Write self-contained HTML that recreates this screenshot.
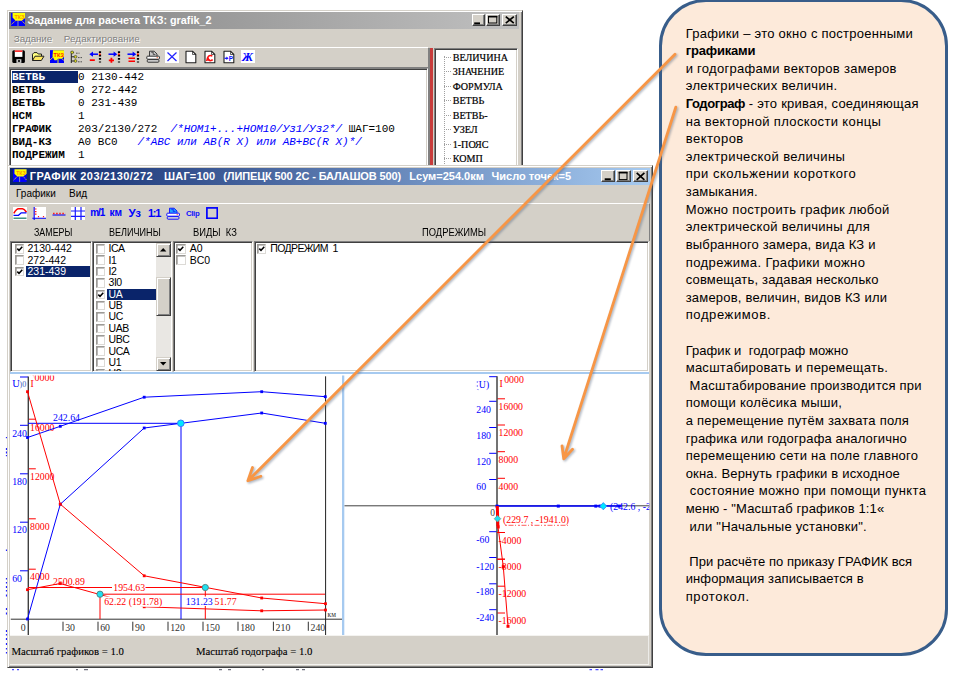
<!DOCTYPE html>
<html lang="ru">
<head>
<meta charset="utf-8">
<title>Графики</title>
<style>
*{box-sizing:border-box;margin:0;padding:0}
html,body{width:960px;height:673px;overflow:hidden;background:#fff}
body{position:relative;font-family:"Liberation Sans",sans-serif;font-size:10px;color:#000}
.abs{position:absolute}
.win{position:absolute;background:#d4d0c8;border:1px solid #d4d0c8;border-right-color:#404040;border-bottom-color:#404040;box-shadow:inset 1px 1px 0 #fff,inset -1px -1px 0 #808080}
.tbar{position:absolute;height:16.5px;color:#fff;font-weight:bold;font-size:11px;line-height:16px;white-space:nowrap;overflow:hidden}
.tbar span{position:absolute;left:19px;top:0}
.cbtn{position:absolute;width:14px;height:12.5px;background:#d4d0c8;border:1px solid #fff;border-right-color:#404040;border-bottom-color:#404040;box-shadow:inset -1px -1px 0 #808080}
.menu{position:absolute;font-size:10px;white-space:nowrap;line-height:12px}
.sunk{position:absolute;background:#fff;border:1px solid #808080;border-right-color:#fff;border-bottom-color:#fff;box-shadow:inset 1px 1px 0 #404040,inset -1px -1px 0 #d4d0c8;overflow:hidden}
.mono{font-family:"Liberation Mono",monospace;font-size:11px;line-height:13px;white-space:pre;position:absolute;left:2px;top:2.3px;color:#000}
.mono b{font-weight:bold}
.mono i{color:#0000ff;font-style:italic}
.mono .sel{background:#0a246a;color:#fff}
.tree{-webkit-text-stroke:.2px #000;position:absolute;font-family:"Liberation Serif",serif;font-size:10.1px;line-height:14.5px;white-space:nowrap;color:#000}
.li{position:absolute;white-space:nowrap;font-size:10.5px;line-height:11px;height:11px}
.li.sel{background:#0a246a;color:#fff}
.cb{position:absolute;width:9.5px;height:9.5px;background:#fff;border:1px solid #9c9a96;border-right-color:#dcdad6;border-bottom-color:#dcdad6;box-shadow:inset .6px .6px 0 #8a8884}
.sbtn{position:absolute;width:14.5px;background:#d4d0c8;border:1px solid #fff;border-left-color:#d4d0c8;border-top-color:#d4d0c8;border-right-color:#404040;border-bottom-color:#404040;box-shadow:inset 1px 1px 0 #fff,inset -1px -1px 0 #808080}
.hdr{position:absolute;font-size:10.2px;line-height:12px;white-space:nowrap;transform-origin:0 50%}
.st{-webkit-text-stroke:.1px #000;position:absolute;font-family:"Liberation Serif",serif;font-size:10.75px;line-height:12px;white-space:nowrap}
#callout{position:absolute;left:659px;top:-1px;width:288.5px;height:657px;border:3px solid #385d8a;border-radius:47px;background:#fdeada}
#ctext .r{height:17.62px}
#ctext{position:absolute;left:685.7px;top:24.6px;font-size:13px;line-height:17.62px;white-space:nowrap;color:#000}
#ctext b{font-weight:bold}
svg text{font-family:"Liberation Serif",serif}
</style>
</head>
<body>

<!-- ================= WINDOW 1 ================= -->
<div class="win" id="w1" style="left:7px;top:10px;width:516px;height:160px"></div>
<div class="tbar" style="left:9px;top:12px;width:510px;background:linear-gradient(90deg,#808080,#c0c0c0)"><span style="left:18.5px;font-size:10.8px">Задание для расчета ТКЗ: grafik_2</span></div>
<div class="cbtn" style="left:471.5px;top:13.6px;width:13px"></div>
<div class="cbtn" style="left:485.7px;top:13.6px;width:14.3px"></div>
<div class="cbtn" style="left:502.4px;top:13.6px;width:14.3px"></div>
<svg class="abs" style="left:470px;top:12px" width="50" height="16" viewBox="470 12 50 16"><rect x="474.2" y="22.4" width="5.8" height="1.9" fill="#000"/><rect x="488.5" y="16.6" width="8.3" height="6.4" fill="none" stroke="#000" stroke-width="1"/><rect x="488" y="15.8" width="9.3" height="1.6" fill="#000"/><path d="M505.8 16.6L513.8 23.2M513.8 16.6L505.8 23.2" stroke="#000" stroke-width="1.7"/></svg>
<div class="menu" style="left:13.8px;top:32.5px;font-size:9.85px;letter-spacing:-.1px;color:#808080;text-shadow:1px 1px 0 #fff">Задание</div>
<div class="menu" style="left:63.8px;top:32.5px;font-size:9.85px;letter-spacing:.08px;color:#808080;text-shadow:1px 1px 0 #fff">Редактирование</div>
<!-- toolbar strip -->
<div class="abs" style="left:9px;top:47px;width:419px;height:21px;border-top:1px solid #fff;border-bottom:1px solid #808080"></div>
<svg class="abs" style="left:10.8px;top:13px" width="14.4" height="13.3" viewBox="0 0 14 13"><rect x="0" y="0" width="14" height="13" fill="#0000ff"/><path d="M1.5 0H14V4.5L10.5 7.5H4.5L1.5 4.5Z" fill="#ffff00"/><path d="M4.5 7.5L0 11.5M10.5 7.5L14 11" stroke="#ffd820" stroke-width="0.9" stroke-dasharray="1.2 0.7"/><path d="M6.8 7.5V13" stroke="#b0b0a0" stroke-width="0.8"/><text x="3.3" y="5.6" font-size="5.2" font-weight="bold" fill="#ff9000" style="font-family:'Liberation Sans',sans-serif">ТКЗ</text></svg>
<svg class="abs" style="left:11.5px;top:50px" width="13.5" height="13.5" viewBox="0 0 13.5 13.5"><rect x="0.3" y="0.3" width="12.6" height="12.6" rx="1.5" fill="#000"/><rect x="2.8" y="0.3" width="7.6" height="6.6" fill="#fff"/><rect x="2.8" y="0.3" width="7.6" height="1.7" fill="#ff3030"/><rect x="4.4" y="9.2" width="5" height="3.7" fill="#c8c8c8"/><rect x="6.2" y="10" width="1.6" height="2" fill="#000"/></svg>
<svg class="abs" style="left:31px;top:51px" width="14" height="12" viewBox="0 0 14 12"><path d="M1.5 9.5V3.2L3 1.6H6L7.2 3H10.5V5" fill="#ffff80" stroke="#202020" stroke-width="1"/><path d="M1.5 9.5L4 5.2H13L10.3 9.5Z" fill="#ffe860" stroke="#202020" stroke-width="1"/></svg>
<svg class="abs" style="left:50px;top:50px" width="14" height="13.3" viewBox="0 0 14 13"><rect x="0" y="0" width="14" height="13" fill="#0000ff"/><path d="M3 0H14V6.5L12 8.5H8L6.5 10H4.5L2.5 6Z" fill="#ffff00"/><path d="M3 7L0 10M12 8.5L14 10.5" stroke="#ffe020" stroke-width="0.9"/><path d="M8 9V13" stroke="#ffff00" stroke-width="0.9"/><text x="3.6" y="6.8" font-size="5.4" font-weight="bold" fill="#ff2000" style="font-family:'Liberation Sans',sans-serif">ТКЗ</text></svg>
<svg class="abs" style="left:68.5px;top:50px" width="14" height="14" viewBox="0 0 14 14"><path d="M2.3 1V13M2.3 2.5H5M2.3 6.8H6.5M2.3 11H6.5" stroke="#202020" stroke-width="1" fill="none"/><circle cx="3.2" cy="2.4" r="1.4" fill="#d8d820" stroke="#303030" stroke-width="0.6"/><circle cx="6.5" cy="6.8" r="1.4" fill="#d8d820" stroke="#303030" stroke-width="0.6"/><circle cx="6.5" cy="11" r="1.4" fill="#d8d820" stroke="#303030" stroke-width="0.6"/><path d="M7 3.2H10.5M9 7.6H13M9 11.8H13" stroke="#505050" stroke-width="1" stroke-dasharray="1.6 0.9"/></svg>
<svg class="abs" style="left:88.5px;top:50px" width="14" height="14" viewBox="0 0 14 14"><path d="M11 1.2V12.5" stroke="#000" stroke-width="2.2" stroke-dasharray="1.8 1.6"/><circle cx="10.8" cy="4.2" r="1" fill="#ff2000"/><path d="M9 4.2H2.5" stroke="#0000ff" stroke-width="1.5"/><path d="M0.3 4.2L4 1.6V6.8Z" fill="#0000ff"/><rect x="0.8" y="9.3" width="5" height="1.7" fill="#ff0000"/></svg>
<svg class="abs" style="left:107.8px;top:50px" width="14" height="14" viewBox="0 0 14 14"><path d="M11 1.2V12.5" stroke="#000" stroke-width="2.2" stroke-dasharray="1.8 1.6"/><circle cx="10.8" cy="4.2" r="1" fill="#ff2000"/><path d="M0.5 4.2H7" stroke="#0000ff" stroke-width="1.5"/><path d="M9.3 4.2L5.6 1.6V6.8Z" fill="#0000ff"/><path d="M0.8 10.3H6M3.4 7.8V12.8" stroke="#ff0000" stroke-width="1.8"/></svg>
<svg class="abs" style="left:127px;top:50px" width="14" height="14" viewBox="0 0 14 14"><path d="M11 1.2V12.5" stroke="#000" stroke-width="2.2" stroke-dasharray="1.8 1.6"/><circle cx="10.8" cy="4.2" r="1" fill="#ff2000"/><path d="M0.5 4.2H7" stroke="#0000ff" stroke-width="1.5"/><path d="M9.3 4.2L5.6 1.6V6.8Z" fill="#0000ff"/><path d="M1.5 8.2H8M1.5 11.3H8" stroke="#ff0000" stroke-width="1.6"/></svg>
<svg class="abs" style="left:146px;top:50px" width="14.5" height="13.5" viewBox="0 0 14.5 13.5"><path d="M3.5 6V1.2H8.2L11 4V6" fill="#c8c8c8" stroke="#303030" stroke-width="0.9"/><path d="M5.2 2.2H7.2V4.4H9.4" fill="none" stroke="#303030" stroke-width="0.8"/><rect x="0.8" y="6.2" width="12.6" height="3" rx="0.8" fill="#fff" stroke="#303030" stroke-width="1"/><rect x="1.3" y="9.6" width="11.6" height="2.6" rx="0.8" fill="#d8d8d8" stroke="#303030" stroke-width="1"/><rect x="10.6" y="7" width="1.3" height="1.2" fill="#ff8060"/></svg>
<svg class="abs" style="left:164.5px;top:50.2px" width="14" height="13.3" viewBox="0 0 14 13.3"><rect width="14" height="13.3" fill="#fff"/><path d="M2.5 2.5L11.5 11M11.5 2.5L2.5 11" stroke="#2020ff" stroke-width="1.2"/></svg>
<svg class="abs" style="left:184.5px;top:50px" width="12" height="14" viewBox="0 0 12 14"><path d="M1 1.2H7.5L10.8 4.5V12.8H1Z" fill="#fff" stroke="#202020" stroke-width="1.1" stroke-linejoin="round"/><path d="M7.5 1.2V4.5H10.8" fill="none" stroke="#202020" stroke-width="0.7"/></svg>
<svg class="abs" style="left:203.8px;top:50px" width="12" height="14" viewBox="0 0 12 14"><path d="M1 1.2H7.5L10.8 4.5V12.8H1Z" fill="#fff" stroke="#202020" stroke-width="1.1" stroke-linejoin="round"/><path d="M7.5 1.2V4.5H10.8" fill="none" stroke="#202020" stroke-width="0.7"/><path d="M8.3 6.2A2.6 2.6 0 1 0 8.6 9.5" fill="none" stroke="#ff1010" stroke-width="1.5"/><path d="M1.8 11.3L3.2 6.5L6.2 10Z" fill="#ff1010"/></svg>
<svg class="abs" style="left:222.8px;top:50px" width="12" height="14" viewBox="0 0 12 14"><path d="M1 1.2H7.5L10.8 4.5V12.8H1Z" fill="#fff" stroke="#202020" stroke-width="1.1" stroke-linejoin="round"/><path d="M7.5 1.2V4.5H10.8" fill="none" stroke="#202020" stroke-width="0.7"/><path d="M1.5 8.3H4" stroke="#1010ff" stroke-width="1.2"/><path d="M5.6 8.3L3.4 6.5V10.1Z" fill="#1010ff"/><text x="5.8" y="11.3" font-size="6.5" font-weight="bold" fill="#1010ff" style="font-family:'Liberation Sans',sans-serif">P</text></svg>
<svg class="abs" style="left:241.3px;top:50.2px" width="14" height="13.3" viewBox="0 0 14 13.3"><rect width="14" height="13.3" fill="#fff"/><text x="1" y="10.8" font-size="12" font-weight="bold" font-style="italic" fill="#0000ff" style="font-family:'Liberation Serif',serif">Ж</text></svg>
<!-- text area -->
<div class="sunk" style="left:9px;top:67.5px;width:419px;height:100px">
<div class="mono"><b><span class="sel">ВЕТВЬ     </span></b>0 2130-442
<b>ВЕТВЬ</b>     0 272-442
<b>ВЕТВЬ</b>     0 231-439
<b>НСМ</b>       1
<b>ГРАФИК</b>    203/2130/272  <i>/*НОМ1+...+НОМ10/Уз1/Уз2*/</i> ШАГ=100
<b>ВИД-КЗ</b>    A0 BC0   <i>/*АВС или АВ(R X) или АВ+ВС(R X)*/</i>
<b>ПОДРЕЖИМ</b>  1</div>
</div>
<!-- red splitter -->
<div class="abs" style="left:430px;top:47.5px;width:3px;height:120px;background:#c83c3c"></div>
<div class="abs" style="left:428px;top:47.5px;width:2px;height:120px;background:#808080"></div>
<!-- tree panel -->
<div class="sunk" style="left:434px;top:47.5px;width:84px;height:120px"></div>
<div class="abs" style="left:443.5px;top:56px;width:0;height:110px;border-left:1px dotted #a0a0a0"></div>
<div class="abs" style="left:444px;top:56.7px;width:7px;height:0;border-top:1px dotted #a0a0a0"></div>
<div class="abs" style="left:444px;top:71.2px;width:7px;height:0;border-top:1px dotted #a0a0a0"></div>
<div class="abs" style="left:444px;top:85.7px;width:7px;height:0;border-top:1px dotted #a0a0a0"></div>
<div class="abs" style="left:444px;top:100.2px;width:7px;height:0;border-top:1px dotted #a0a0a0"></div>
<div class="abs" style="left:444px;top:114.7px;width:7px;height:0;border-top:1px dotted #a0a0a0"></div>
<div class="abs" style="left:444px;top:129.2px;width:7px;height:0;border-top:1px dotted #a0a0a0"></div>
<div class="abs" style="left:444px;top:143.7px;width:7px;height:0;border-top:1px dotted #a0a0a0"></div>
<div class="abs" style="left:444px;top:158.2px;width:7px;height:0;border-top:1px dotted #a0a0a0"></div>
<div class="tree" style="left:452.7px;top:50.6px">ВЕЛИЧИНА<br>ЗНАЧЕНИЕ<br>ФОРМУЛА<br>ВЕТВЬ<br>ВЕТВЬ-<br>УЗЕЛ<br>1-ПОЯС<br>КОМП</div>

<!-- ================= WINDOW 2 ================= -->
<div class="win" id="w2" style="left:7px;top:165px;width:646px;height:503px"></div>
<div class="tbar" style="left:10px;top:168px;width:639.5px;background:linear-gradient(90deg,#0a246a,#a6caf0)"><span style="left:19.7px;letter-spacing:.46px">ГРАФИК 203/2130/272</span><span style="left:154px;letter-spacing:.2px">ШАГ=100</span><span style="left:213.3px;letter-spacing:-.13px">(ЛИПЕЦК 500 2С - БАЛАШОВ 500)</span><span style="left:399.3px">Lсум=254.0км</span><span style="left:481.6px">Число точек=5</span></div>
<div class="cbtn" style="left:601.2px;top:169.6px;width:14px"></div>
<div class="cbtn" style="left:616.2px;top:169.6px;width:14.6px"></div>
<div class="cbtn" style="left:633px;top:169.6px;width:14.6px"></div>
<svg class="abs" style="left:600px;top:168px" width="50" height="16" viewBox="600 168 50 16"><rect x="604.7" y="178.3" width="6.1" height="2" fill="#000"/><rect x="619.2" y="172.6" width="7.8" height="7" fill="none" stroke="#000" stroke-width="1"/><rect x="618.7" y="171.7" width="8.8" height="1.7" fill="#000"/><path d="M636.7 172.8L644.4 179.8M644.4 172.8L636.7 179.8" stroke="#000" stroke-width="1.7"/></svg>
<div class="menu" style="left:16px;top:188px">Графики</div>
<div class="menu" style="left:69px;top:188px">Вид</div>
<!-- panel with toolbar and headers -->
<svg class="abs" style="left:13px;top:169.2px" width="13.6" height="13.3" viewBox="0 0 14 13"><rect x="0" y="0" width="14" height="13" fill="#0000ff"/><path d="M1.5 0H14V4.5L10.5 7.5H4.5L1.5 4.5Z" fill="#ffff00"/><path d="M4.5 7.5L0 11.5M10.5 7.5L14 11" stroke="#ffd820" stroke-width="0.9" stroke-dasharray="1.2 0.7"/><path d="M6.8 7.5V13" stroke="#b0b0a0" stroke-width="0.8"/><text x="3.3" y="5.6" font-size="5.2" font-weight="bold" fill="#ff9000" style="font-family:'Liberation Sans',sans-serif">ТКЗ</text></svg>
<svg class="abs" style="left:13.3px;top:206.5px" width="14" height="13.3" viewBox="0 0 14 13.3"><rect width="14" height="13.3" fill="#fff"/><path d="M0.8 6.3C2.5 3.5 4 1.8 5.5 1.8H9.5C11.5 2 12.5 3.8 13.5 5.2" fill="none" stroke="#ff0000" stroke-width="1.6"/><path d="M0.5 8.3H5.5L8.2 5.8H13.5" fill="none" stroke="#0000ff" stroke-width="1.2"/><path d="M0.5 11.2H13.5" stroke="#208070" stroke-width="1.3"/></svg>
<svg class="abs" style="left:32.3px;top:206.5px" width="14" height="13.3" viewBox="0 0 14 13.3"><rect x="2" width="12" height="11" fill="#fff"/><path d="M2.2 0V13.3M0.3 11.2H14" stroke="#0000ff" stroke-width="1.1"/><path d="M2.8 2H4.5M2.8 4.6H4.5M2.8 7.2H4.5M6.5 10.3V9M11.5 10.3V9" stroke="#ff2020" stroke-width="1.2"/></svg>
<svg class="abs" style="left:51.5px;top:206.5px" width="14" height="13.3" viewBox="0 0 14 13.3"><path d="M0.5 8H13.5" stroke="#0000ff" stroke-width="1.1"/><path d="M1 6.5H13.5" stroke="#ff2020" stroke-width="1.3" stroke-dasharray="1.6 1.5"/></svg>
<svg class="abs" style="left:70.5px;top:206.5px" width="14" height="13.3" viewBox="0 0 14 13.3"><rect width="14" height="13.3" fill="#fff"/><path d="M4.3 0V13.3M10 0V13.3M0 4H14M0 9.3H14" stroke="#1818ff" stroke-width="1.2"/></svg>
<div class="abs" style="left:90.2px;top:206px;width:14px;height:14px;line-height:14px;font-weight:bold;color:#0000ff;font-size:10px;letter-spacing:-1px;white-space:nowrap">m/1</div>
<div class="abs" style="left:109.5px;top:206px;width:14px;height:14px;line-height:14px;font-weight:bold;color:#0000ff;font-size:10.2px;letter-spacing:0px;white-space:nowrap">км</div>
<div class="abs" style="left:128.6px;top:206px;width:14px;height:14px;line-height:14px;font-weight:bold;color:#0000ff;font-size:11.5px;letter-spacing:0px;white-space:nowrap">Уз</div>
<div class="abs" style="left:148px;top:206px;width:12px;height:14px;line-height:14px;font-weight:bold;color:#0000ff;font-size:11px;letter-spacing:-1.3px;white-space:nowrap">1:1</div>
<svg class="abs" style="left:166.3px;top:206.5px" width="14.5" height="13.5" viewBox="0 0 14.5 13.5"><path d="M3.5 6V1.2H8.2L11 4V6" fill="#20a0ff" stroke="#1010ff" stroke-width="0.9"/><path d="M5.2 2.2H7.2V4.4H9.4" fill="none" stroke="#1010ff" stroke-width="0.8"/><rect x="0.8" y="6.2" width="12.6" height="3" rx="0.8" fill="#fff" stroke="#1010ff" stroke-width="1"/><rect x="1.3" y="9.6" width="11.6" height="2.6" rx="0.8" fill="#d8d8d8" stroke="#1010ff" stroke-width="1"/><rect x="10.6" y="7" width="1.3" height="1.2" fill="#ff8060"/></svg>
<div class="abs" style="left:186px;top:206.5px;width:14px;height:14px;line-height:14px;color:#1010ff;font-weight:bold;font-size:7.8px;letter-spacing:-.35px;white-space:nowrap">Clip</div>
<svg class="abs" style="left:205.7px;top:206.9px" width="12.2" height="12.2" viewBox="0 0 12.2 12.2"><rect x="0.9" y="0.9" width="10.4" height="10.4" fill="none" stroke="#0000ff" stroke-width="1.7"/></svg>

<div class="abs" style="left:10px;top:203px;width:640px;height:38px;border-top:1px solid #fff;border-right:1px solid #808080"></div>
<div class="hdr" style="left:34.2px;top:226.5px;transform:scaleX(.87)">ЗАМЕРЫ</div>
<div class="hdr" style="left:109.2px;top:226.5px;transform:scaleX(.89)">ВЕЛИЧИНЫ</div>
<div class="hdr" style="left:192.8px;top:226.5px;transform:scaleX(.92)">ВИДЫ&nbsp; КЗ</div>
<div class="hdr" style="left:422.1px;top:226.5px;transform:scaleX(.92)">ПОДРЕЖИМЫ</div>
<!-- listboxes -->
<div class="sunk" style="left:10px;top:240.5px;width:81.5px;height:131px"></div>
<div class="sunk" style="left:92px;top:240.5px;width:80px;height:131px"></div>
<div class="sunk" style="left:172.5px;top:240.5px;width:80.5px;height:131px"></div>
<div class="sunk" style="left:254px;top:240.5px;width:395px;height:131px"></div>

<div id="lists" class="abs" style="left:0;top:0;width:660px;height:370.5px;overflow:hidden">
<div class="cb" style="left:14.7px;top:244.1px"></div>
<svg class="abs" style="left:14.7px;top:244.1px" width="9.5" height="9.5" viewBox="0 0 9.5 9.5"><path d="M2.3 4.6L4 6.3L7.3 2.8" fill="none" stroke="#000" stroke-width="1.5"/></svg>
<div class="li" style="left:26px;top:243.2px;width:64px;padding-left:1.5px">2130-442</div>
<div class="cb" style="left:14.7px;top:255.47px"></div>
<div class="li" style="left:26px;top:254.6px;width:64px;padding-left:1.5px">272-442</div>
<div class="cb" style="left:14.7px;top:266.84px"></div>
<svg class="abs" style="left:14.7px;top:266.84px" width="9.5" height="9.5" viewBox="0 0 9.5 9.5"><path d="M2.3 4.6L4 6.3L7.3 2.8" fill="none" stroke="#000" stroke-width="1.5"/></svg>
<div class="li sel" style="left:26px;top:265.9px;width:64px;padding-left:1.5px">231-439</div>
<div class="cb" style="left:95.5px;top:244.1px"></div>
<div class="li" style="left:107px;top:243.2px;width:49px;padding-left:1.5px;letter-spacing:-.45px">ICA</div>
<div class="cb" style="left:95.5px;top:255.47px"></div>
<div class="li" style="left:107px;top:254.6px;width:49px;padding-left:1.5px;letter-spacing:-.45px">I1</div>
<div class="cb" style="left:95.5px;top:266.84px"></div>
<div class="li" style="left:107px;top:265.9px;width:49px;padding-left:1.5px;letter-spacing:-.45px">I2</div>
<div class="cb" style="left:95.5px;top:278.21px"></div>
<div class="li" style="left:107px;top:277.3px;width:49px;padding-left:1.5px;letter-spacing:-.45px">3I0</div>
<div class="cb" style="left:95.5px;top:289.58px"></div>
<svg class="abs" style="left:95.5px;top:289.58px" width="9.5" height="9.5" viewBox="0 0 9.5 9.5"><path d="M2.3 4.6L4 6.3L7.3 2.8" fill="none" stroke="#000" stroke-width="1.5"/></svg>
<div class="li sel" style="left:107px;top:288.7px;width:49px;padding-left:1.5px;letter-spacing:-.45px">UA</div>
<div class="cb" style="left:95.5px;top:300.94999999999993px"></div>
<div class="li" style="left:107px;top:300.0px;width:49px;padding-left:1.5px;letter-spacing:-.45px">UB</div>
<div class="cb" style="left:95.5px;top:312.31999999999994px"></div>
<div class="li" style="left:107px;top:311.4px;width:49px;padding-left:1.5px;letter-spacing:-.45px">UC</div>
<div class="cb" style="left:95.5px;top:323.68999999999994px"></div>
<div class="li" style="left:107px;top:322.8px;width:49px;padding-left:1.5px;letter-spacing:-.45px">UAB</div>
<div class="cb" style="left:95.5px;top:335.05999999999995px"></div>
<div class="li" style="left:107px;top:334.2px;width:49px;padding-left:1.5px;letter-spacing:-.45px">UBC</div>
<div class="cb" style="left:95.5px;top:346.42999999999995px"></div>
<div class="li" style="left:107px;top:345.5px;width:49px;padding-left:1.5px;letter-spacing:-.45px">UCA</div>
<div class="cb" style="left:95.5px;top:357.79999999999995px"></div>
<div class="li" style="left:107px;top:356.9px;width:49px;padding-left:1.5px;letter-spacing:-.45px">U1</div>
<div class="cb" style="left:95.5px;top:369.16999999999996px"></div>
<div class="li" style="left:107px;top:368.3px;width:49px;padding-left:1.5px;letter-spacing:-.45px">U2</div>
<div class="cb" style="left:176.3px;top:244.1px"></div>
<svg class="abs" style="left:176.3px;top:244.1px" width="9.5" height="9.5" viewBox="0 0 9.5 9.5"><path d="M2.3 4.6L4 6.3L7.3 2.8" fill="none" stroke="#000" stroke-width="1.5"/></svg>
<div class="li" style="left:188.2px;top:243.2px;width:40px;padding-left:1.5px">A0</div>
<div class="cb" style="left:176.3px;top:255.47px"></div>
<div class="li" style="left:188.2px;top:254.6px;width:40px;padding-left:1.5px">BC0</div>
<div class="cb" style="left:256.7px;top:244.1px"></div>
<svg class="abs" style="left:256.7px;top:244.1px" width="9.5" height="9.5" viewBox="0 0 9.5 9.5"><path d="M2.3 4.6L4 6.3L7.3 2.8" fill="none" stroke="#000" stroke-width="1.5"/></svg>
<div class="li" style="left:268.8px;top:243.2px;width:80px;padding-left:1.5px;letter-spacing:-.62px">ПОДРЕЖИМ&nbsp; 1</div>
<div class="abs" style="left:156.3px;top:242.5px;width:14.5px;height:128px;background:#e9e7e3"></div>
<div class="sbtn" style="left:156.3px;top:243px;height:13.5px"></div>
<div class="sbtn" style="left:156.3px;top:276.5px;height:39.5px"></div>
<div class="sbtn" style="left:156.3px;top:357px;height:13.5px"></div>
<svg class="abs" style="left:156.3px;top:243px" width="14.5" height="13.5"><path d="M4 8.5L7.2 5L10.4 8.5Z" fill="#000"/></svg>
<svg class="abs" style="left:156.3px;top:357px" width="14.5" height="13.5"><path d="M4 5L7.2 8.5L10.4 5Z" fill="#000"/></svg>
</div>
<!-- graph area -->
<div class="abs" style="left:10px;top:372px;width:639.3px;height:263.5px;background:#fff;border-top:2.5px solid #a6caf0"></div>

<!-- status bar -->
<div class="abs" style="left:10px;top:635.3px;width:639.3px;height:29.7px;border-top:1px solid #f4f3f0;border-bottom:1px solid #f4f3f0;border-right:1px solid #ecebe8"></div>
<div class="st" style="left:11.5px;top:645px">Масштаб графиков = 1.0</div>
<div class="st" style="left:196px;top:645px">Масштаб годографа = 1.0</div>

<!-- ================= CALLOUT ================= -->
<div id="callout"></div>
<div id="ctext">
<div class="r" style="letter-spacing:0.270px">Графики – это окно с построенными</div>
<div class="r" style="letter-spacing:-0.189px"><b>графиками</b></div>
<div class="r" style="letter-spacing:0.277px">и годографами векторов замеров</div>
<div class="r" style="letter-spacing:0.343px">электрических величин.</div>
<div class="r" style="letter-spacing:0.236px"><b style="letter-spacing:-.42px">Годограф</b> - это кривая, соединяющая</div>
<div class="r" style="letter-spacing:0.365px">на векторной плоскости концы</div>
<div class="r" style="letter-spacing:0.477px">векторов</div>
<div class="r" style="letter-spacing:0.397px">электрической величины</div>
<div class="r" style="letter-spacing:0.524px">при скольжении короткого</div>
<div class="r" style="letter-spacing:0.232px">замыкания.</div>
<div class="r" style="letter-spacing:0.311px">Можно построить график любой</div>
<div class="r" style="letter-spacing:0.293px">электрической величины для</div>
<div class="r" style="letter-spacing:0.181px">выбранного замера, вида КЗ и</div>
<div class="r" style="letter-spacing:0.414px">подрежима. Графики можно</div>
<div class="r" style="letter-spacing:0.175px">совмещать, задавая несколько</div>
<div class="r" style="letter-spacing:0.207px">замеров, величин, видов КЗ или</div>
<div class="r" style="letter-spacing:0.606px">подрежимов.</div>
<div class="r">&nbsp;</div>
<div class="r" style="letter-spacing:0.055px">График и&nbsp; годограф можно</div>
<div class="r" style="letter-spacing:0.260px">масштабировать и перемещать.</div>
<div class="r" style="letter-spacing:0.248px">&nbsp;Масштабирование производится при</div>
<div class="r" style="letter-spacing:0.321px">помощи колёсика мыши,</div>
<div class="r" style="letter-spacing:0.208px">а перемещение путём захвата поля</div>
<div class="r" style="letter-spacing:0.149px">графика или годографа аналогично</div>
<div class="r" style="letter-spacing:0.284px">перемещению сети на поле главного</div>
<div class="r" style="letter-spacing:0.190px">окна. Вернуть графики в исходное</div>
<div class="r" style="letter-spacing:0.345px">&nbsp;состояние можно при помощи пункта</div>
<div class="r" style="letter-spacing:0.143px">меню - "Масштаб графиков 1:1«</div>
<div class="r" style="letter-spacing:0.252px">&nbsp;или "Начальные установки".</div>
<div class="r">&nbsp;</div>
<div class="r" style="letter-spacing:0.052px">&nbsp;При расчёте по приказу ГРАФИК вся</div>
<div class="r" style="letter-spacing:0.117px">информация записывается в</div>
<div class="r" style="letter-spacing:0.641px">протокол.</div>
</div>

<svg class="abs" id="chart" style="left:0;top:0" width="960" height="673" viewBox="0 0 960 673">
<defs><clipPath id="cl"><rect x="10.5" y="375.5" width="331.5" height="259.5"/></clipPath><clipPath id="cr"><rect x="344.3" y="375.5" width="305" height="259.5"/></clipPath><filter id="sh" x="-5%" y="-5%" width="110%" height="110%"><feGaussianBlur stdDeviation="1"/></filter></defs>
<g fill="#2020ff"><rect x="5.9" y="437" width="1.1" height="1.2"/><rect x="5.9" y="448" width="1.1" height="2"/><rect x="5.9" y="451.5" width="1.1" height="2"/><rect x="5.9" y="455" width="1.1" height="1.2"/><rect x="5.9" y="549.5" width="1.1" height="1.5"/><rect x="5.9" y="578" width="1.1" height="1.5"/><rect x="5.9" y="582" width="1.1" height="1.5"/><rect x="5.9" y="586" width="1.1" height="2"/><rect x="5.9" y="590" width="1.1" height="1.5"/><rect x="5.9" y="594.5" width="1.1" height="2"/><rect x="5.9" y="608" width="1.1" height="2"/><rect x="5.9" y="612.5" width="1.1" height="2"/><rect x="5.9" y="630" width="1.1" height="2"/><rect x="5.9" y="634" width="1.1" height="1.5"/><rect x="5.9" y="638" width="1.1" height="2"/><rect x="5.9" y="643" width="1.1" height="2"/><rect x="5.9" y="648" width="1.1" height="1.5"/><rect x="5.9" y="652" width="1.1" height="1.5"/><rect x="12" y="669.2" width="2" height="1"/><rect x="17" y="669.2" width="2" height="1"/><rect x="589.5" y="669.2" width="2.5" height="1"/><rect x="595.5" y="669.2" width="3" height="1"/><rect x="600.5" y="669.2" width="2.5" height="1"/></g><g fill="#505060"><rect x="76" y="669.2" width="2" height="1"/><rect x="84" y="669.2" width="4" height="1"/><rect x="219" y="669.2" width="3" height="1"/><rect x="228" y="669.2" width="3" height="1"/><rect x="262" y="669.2" width="2" height="1"/><rect x="296" y="669.2" width="3" height="1"/><rect x="302" y="669.2" width="3" height="1"/></g>
<g clip-path="url(#cl)">
<text x="29.5" y="381.2" font-size="10" fill="#ff0000">20000</text>
<text x="12.3" y="387" font-size="10.5" fill="#0000ff">U</text>
<text x="19.5" y="387.3" font-size="8" fill="#4060c0">)0</text>
<rect x="29.2" y="375" width="4.6" height="13" fill="#fff"/><text x="30.6" y="387" font-size="9.5" fill="#ff0000">I</text>
<path d="M20 377H28" stroke="#0000ff" stroke-width="1"/>
<path d="M20 425.3H28" stroke="#0000ff" stroke-width="1"/>
<path d="M20 473.8H28" stroke="#0000ff" stroke-width="1"/>
<path d="M20 522.2H28" stroke="#0000ff" stroke-width="1"/>
<path d="M20 570.8H28" stroke="#0000ff" stroke-width="1"/>
<path d="M28.5 419.2H35.8" stroke="#ff0000" stroke-width="1"/>
<path d="M28.5 468.8H35.8" stroke="#ff0000" stroke-width="1"/>
<path d="M28.5 518.8H35.8" stroke="#ff0000" stroke-width="1"/>
<path d="M28.5 569.2H35.8" stroke="#ff0000" stroke-width="1"/>
<text x="12.2" y="436.7" font-size="9.8" fill="#0000ff">240</text>
<text x="12.2" y="484.7" font-size="9.8" fill="#0000ff">180</text>
<text x="12.2" y="533.3" font-size="9.8" fill="#0000ff">120</text>
<text x="12.2" y="581.7" font-size="9.8" fill="#0000ff">60</text>
<text x="30" y="431" font-size="9.8" fill="#ff0000">16000</text>
<text x="30" y="480" font-size="9.8" fill="#ff0000">12000</text>
<text x="30" y="530" font-size="9.8" fill="#ff0000">8000</text>
<text x="30" y="580" font-size="9.8" fill="#ff0000">4000</text>
<path d="M28.3 376.5V635" stroke="#404040" stroke-width="1.4"/>
<path d="M10.5 619.2H342" stroke="#303030" stroke-width="1"/>
<path d="M325.6 376.3V635" stroke="#202020" stroke-width="1"/>
<path d="M28 423.3H180.8M181 423.3V619" stroke="#0000ff" stroke-width="1" fill="none"/>
<path d="M28 587.5H205.3M205.3 587.5V619" stroke="#ff0000" stroke-width="1" fill="none"/>
<path d="M100 594.2H325M100 594.2V619" stroke="#ff0000" stroke-width="1" fill="none"/>
<path d="M27.5 437.5L60.3 426.3L144.2 397.2L261.7 391.7L325.3 396.7" fill="none" stroke="#0000ff" stroke-width="1"/>
<rect x="26.1" y="436.1" width="2.8" height="2.8" fill="#0000ff"/>
<rect x="58.9" y="424.9" width="2.8" height="2.8" fill="#0000ff"/>
<rect x="142.8" y="395.8" width="2.8" height="2.8" fill="#0000ff"/>
<rect x="260.3" y="390.3" width="2.8" height="2.8" fill="#0000ff"/>
<rect x="323.9" y="395.3" width="2.8" height="2.8" fill="#0000ff"/>
<path d="M27.5 619L60.3 504.2L144.2 428L261.7 413L325.3 423.3" fill="none" stroke="#0000ff" stroke-width="1"/>
<rect x="26.1" y="617.6" width="2.8" height="2.8" fill="#0000ff"/>
<rect x="58.9" y="502.8" width="2.8" height="2.8" fill="#0000ff"/>
<rect x="142.8" y="426.6" width="2.8" height="2.8" fill="#0000ff"/>
<rect x="260.3" y="411.6" width="2.8" height="2.8" fill="#0000ff"/>
<rect x="323.9" y="421.9" width="2.8" height="2.8" fill="#0000ff"/>
<path d="M27.5 391.7L60.3 504.2L144.2 575.8L261.7 598L325.5 603.7" fill="none" stroke="#ff0000" stroke-width="1"/>
<rect x="26.1" y="390.3" width="2.8" height="2.8" fill="#ff0000"/>
<rect x="58.9" y="502.8" width="2.8" height="2.8" fill="#ff0000"/>
<rect x="142.8" y="574.4" width="2.8" height="2.8" fill="#ff0000"/>
<rect x="260.3" y="596.6" width="2.8" height="2.8" fill="#ff0000"/>
<rect x="324.1" y="602.3" width="2.8" height="2.8" fill="#ff0000"/>
<path d="M27.5 589.7L60 583.5L144.2 606.8L261.7 610.8L325.5 610" fill="none" stroke="#ff0000" stroke-width="1"/>
<rect x="26.1" y="588.3" width="2.8" height="2.8" fill="#ff0000"/>
<rect x="58.6" y="582.1" width="2.8" height="2.8" fill="#ff0000"/>
<rect x="142.8" y="605.4" width="2.8" height="2.8" fill="#ff0000"/>
<rect x="260.3" y="609.4" width="2.8" height="2.8" fill="#ff0000"/>
<rect x="324.1" y="608.6" width="2.8" height="2.8" fill="#ff0000"/>
<rect x="112" y="583" width="33.5" height="9" fill="#fff"/><text x="113.3" y="591.3" font-size="9.8" fill="#ff0000">1954.63</text>
<rect x="103" y="596.5" width="59" height="10.3" fill="#fff"/><text x="104.2" y="605" font-size="9.8" fill="#ff0000">62.22 (191.78)</text>
<rect x="184.5" y="596.5" width="53" height="9.5" fill="#fff"/><text x="185.8" y="604.7" font-size="9.8" fill="#0000ff">131.23</text><text x="214.5" y="604.7" font-size="9.8" fill="#ff0000">51.77</text>
<text x="53" y="421" font-size="9.8" fill="#0000ff">242.64</text>
<text x="53" y="585" font-size="9.8" fill="#ff0000">2500.89</text>
<circle cx="180.8" cy="423.3" r="3.3" fill="#00e8ff" stroke="#3080ff" stroke-width="1"/>
<circle cx="205.3" cy="587.5" r="3.1" fill="#20e0f0" stroke="#508888" stroke-width="1"/>
<circle cx="100" cy="594.2" r="3.1" fill="#20e0f0" stroke="#508888" stroke-width="1"/>
<text x="20.8" y="631.3" font-size="9.8" fill="#303030">0</text>
<path d="M63 621.7V630.8" stroke="#303030" stroke-width="1"/><text x="65.2" y="631.3" font-size="9.8" fill="#303030">30</text>
<path d="M98 621.7V630.8" stroke="#303030" stroke-width="1"/><text x="100.2" y="631.3" font-size="9.8" fill="#303030">60</text>
<path d="M132.8 621.7V630.8" stroke="#303030" stroke-width="1"/><text x="135.0" y="631.3" font-size="9.8" fill="#303030">90</text>
<path d="M168 621.7V630.8" stroke="#303030" stroke-width="1"/><text x="170.2" y="631.3" font-size="9.8" fill="#303030">120</text>
<path d="M203 621.7V630.8" stroke="#303030" stroke-width="1"/><text x="205.2" y="631.3" font-size="9.8" fill="#303030">150</text>
<path d="M238 621.7V630.8" stroke="#303030" stroke-width="1"/><text x="240.2" y="631.3" font-size="9.8" fill="#303030">180</text>
<path d="M273.4 621.7V630.8" stroke="#303030" stroke-width="1"/><text x="275.6" y="631.3" font-size="9.8" fill="#303030">210</text>
<path d="M308.3 621.7V630.8" stroke="#303030" stroke-width="1"/><text x="310.5" y="631.3" font-size="9.8" fill="#303030">240</text>
<text x="327.6" y="616.8" font-size="7.5" fill="#303030">км</text>
</g>
<rect x="342" y="375.5" width="2.3" height="259.5" fill="#a6caf0"/>
<g clip-path="url(#cr)">
<path d="M344.3 505.8H649.5" stroke="#404040" stroke-width="1"/>
<path d="M489.2 376.7H497" stroke="#0000ff" stroke-width="1"/>
<path d="M489.2 401.3H497" stroke="#0000ff" stroke-width="1"/>
<path d="M489.2 427.5H497" stroke="#0000ff" stroke-width="1"/>
<path d="M489.2 453.3H497" stroke="#0000ff" stroke-width="1"/>
<path d="M489.2 479.5H497" stroke="#0000ff" stroke-width="1"/>
<path d="M489.2 531.7H497" stroke="#0000ff" stroke-width="1"/>
<path d="M489.2 557.5H497" stroke="#0000ff" stroke-width="1"/>
<path d="M489.2 583.8H497" stroke="#0000ff" stroke-width="1"/>
<path d="M489.2 609.7H497" stroke="#0000ff" stroke-width="1"/>
<path d="M497 398.8H505" stroke="#ff0000" stroke-width="1"/>
<path d="M497 425H505" stroke="#ff0000" stroke-width="1"/>
<path d="M497 451.7H505" stroke="#ff0000" stroke-width="1"/>
<path d="M497 478.3H505" stroke="#ff0000" stroke-width="1"/>
<path d="M497 532.5H505" stroke="#ff0000" stroke-width="1"/>
<path d="M497 559.2H505" stroke="#ff0000" stroke-width="1"/>
<path d="M497 586.2H505" stroke="#ff0000" stroke-width="1"/>
<path d="M497 613H505" stroke="#ff0000" stroke-width="1"/>
<text x="475.6" y="387.5" font-size="9.8" fill="#0000ff">(U)</text><rect x="475.2" y="378" width="3.3" height="11" fill="#fff"/><path d="M477.3 381.5v1M477.3 385.5v1" stroke="#0000ff" stroke-width="1"/>
<text x="476.3" y="413" font-size="9.8" fill="#0000ff">240</text>
<text x="476.3" y="438.8" font-size="9.8" fill="#0000ff">180</text>
<text x="476.3" y="464.7" font-size="9.8" fill="#0000ff">120</text>
<text x="476.3" y="490.3" font-size="9.8" fill="#0000ff">60</text>
<text x="476.3" y="543.3" font-size="9.8" fill="#0000ff">-60</text>
<text x="476.3" y="569.7" font-size="9.8" fill="#0000ff">-120</text>
<text x="476.3" y="595" font-size="9.8" fill="#0000ff">-180</text>
<text x="476.3" y="620.8" font-size="9.8" fill="#0000ff">-240</text>
<text x="499.6" y="386.7" font-size="9.8" fill="#ff0000">I</text><text x="504.2" y="383.3" font-size="9.8" fill="#ff0000">0000</text>
<text x="498.5" y="409.7" font-size="9.8" fill="#ff0000">16000</text>
<text x="498.5" y="436.3" font-size="9.8" fill="#ff0000">12000</text>
<text x="498.5" y="463" font-size="9.8" fill="#ff0000">8000</text>
<text x="498.5" y="489.7" font-size="9.8" fill="#ff0000">4000</text>
<text x="498.5" y="543.5" font-size="9.8" fill="#ff0000">-4000</text>
<text x="498.5" y="570" font-size="9.8" fill="#ff0000">-8000</text>
<text x="498.5" y="597" font-size="9.8" fill="#ff0000">-12000</text>
<text x="498.5" y="623.7" font-size="9.8" fill="#ff0000">-16000</text>
<path d="M497 376.3V635" stroke="#505050" stroke-width="1.6"/>
<text x="490.3" y="515.8" font-size="9.5" fill="#404040">0</text>
<path d="M497 506.1H621.7" stroke="#0000ff" stroke-width="1.5"/>
<rect x="495.5" y="504.6" width="3" height="3" fill="#0000ff"/>
<rect x="556.8" y="504.6" width="3" height="3" fill="#0000ff"/>
<rect x="594.3" y="504.6" width="3" height="3" fill="#0000ff"/>
<rect x="598.5" y="504.6" width="3" height="3" fill="#0000ff"/>
<rect x="617.5" y="504.6" width="3" height="3" fill="#0000ff"/>
<text x="610" y="510" font-size="9.8" fill="#0000ff">(242.6 , -241.0)</text>
<path d="M603.3 502.6L606.8 506.2L603.3 509.8L599.8 506.2Z" fill="#00e8ff" stroke="#3080ff" stroke-width="0.8"/>
<path d="M497.3 506L497.9 526" stroke="#ff0000" stroke-width="3"/>
<path d="M497.9 526L503.3 566.7L508 626.3" fill="none" stroke="#ff0000" stroke-width="1"/>
<path d="M497 532.5H505M497 559.2H505" stroke="#ff0000" stroke-width="1"/>
<rect x="501.8" y="565.2" width="3" height="3" fill="#ff0000"/>
<rect x="506.5" y="624.8" width="3" height="3" fill="#ff0000"/>
<rect x="496.7" y="525.5" width="3" height="3" fill="#ff0000"/>
<text x="503" y="522.5" font-size="9.8" fill="#ff0000">(229.7 , -1941.0)</text>
<path d="M505 525.3H568" stroke="#ff0000" stroke-width="0.8" stroke-dasharray="2 1.5 5 1.5 1 2" opacity="0.8"/>
<path d="M497.5 515.4L500.8 518.7L497.5 522L494.2 518.7Z" fill="#20e0f0" stroke="#60a0a0" stroke-width="0.8"/>
</g>
<path d="M675 54.2L247.9 480.8M252.5 467.5L247.9 480.8L260.8 476.3" fill="none" stroke="#50607a" stroke-width="3" stroke-linecap="round" stroke-linejoin="round" opacity="0.45" filter="url(#sh)" transform="translate(1.2,1.2)"/>
<path d="M675 54.2L247.9 480.8M252.5 467.5L247.9 480.8L260.8 476.3" fill="none" stroke="#f79646" stroke-width="2.8" stroke-linecap="round" stroke-linejoin="round"/>
<path d="M675.8 107.2L563.75 458.75M562 445.8L563.75 458.75L572.5 449.2" fill="none" stroke="#50607a" stroke-width="3" stroke-linecap="round" stroke-linejoin="round" opacity="0.45" filter="url(#sh)" transform="translate(1.2,1.2)"/>
<path d="M675.8 107.2L563.75 458.75M562 445.8L563.75 458.75L572.5 449.2" fill="none" stroke="#f79646" stroke-width="2.8" stroke-linecap="round" stroke-linejoin="round"/>
</svg>
</body>
</html>
